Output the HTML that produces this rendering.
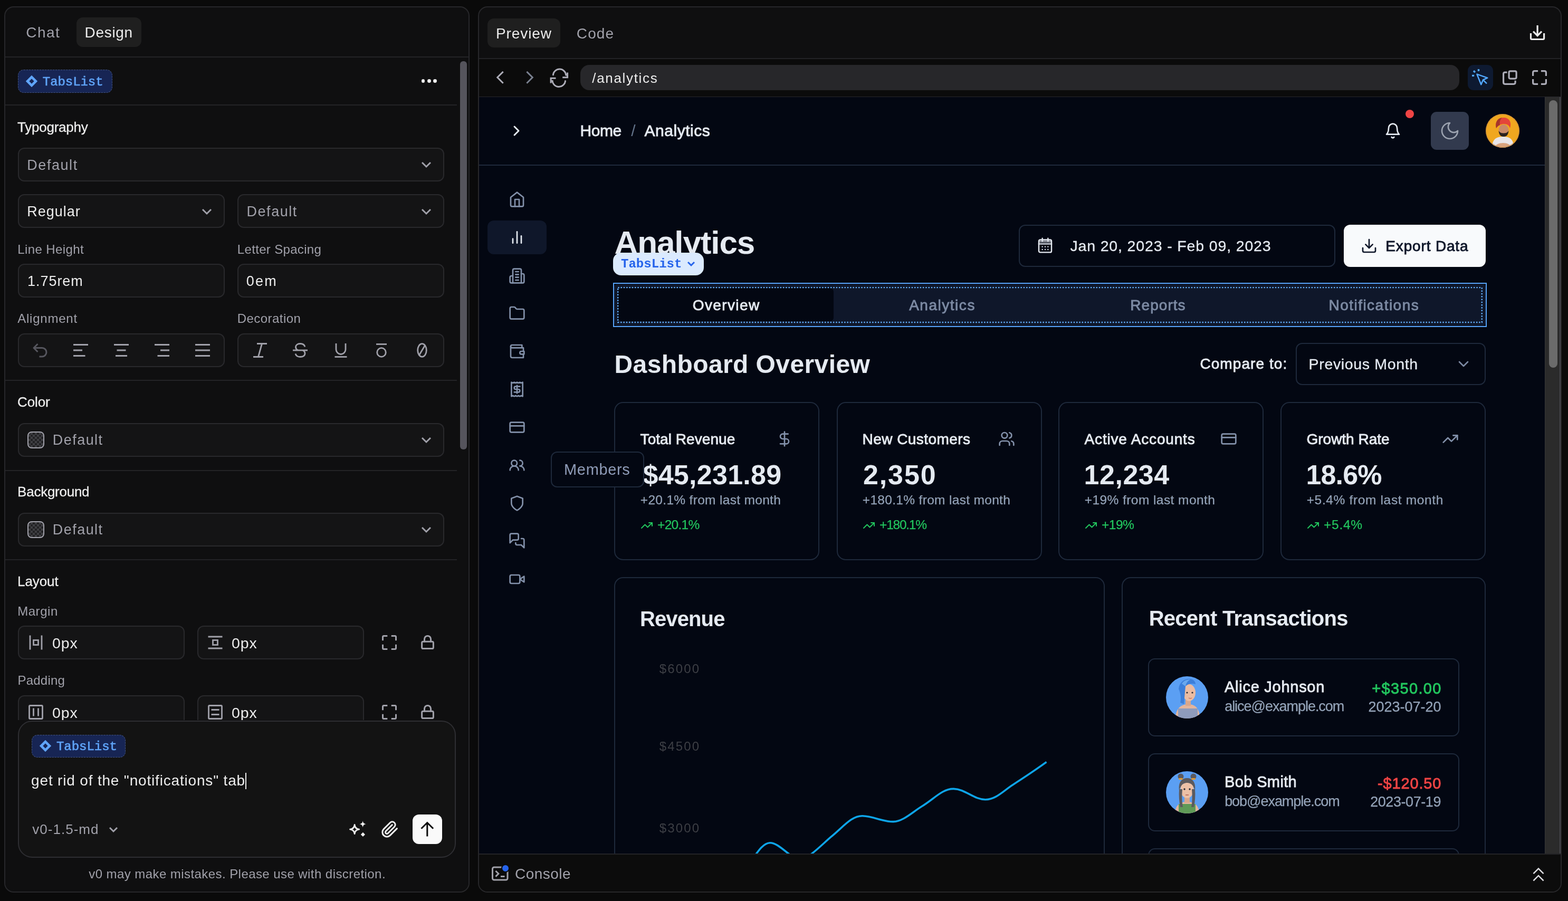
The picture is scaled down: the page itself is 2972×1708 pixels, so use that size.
<!DOCTYPE html>
<html lang="en"><head><meta charset="utf-8"><title>v0 – Analytics dashboard</title>
<style>
html,body{margin:0;padding:0}
body{width:2972px;height:1708px;background:#0a0a0a;position:relative;overflow:hidden;font-family:"Liberation Sans",sans-serif;will-change:transform;}
body div,body span.t,body svg{position:absolute;box-sizing:border-box}
span.t{white-space:pre;line-height:1}
span.m{font-family:"Liberation Mono",monospace}
svg{overflow:visible}
</style></head>
<body>
<div style="left:8px;top:12px;width:882px;height:1680px;background:#0f0f10;border:2px solid #27272a;border-radius:18px;"></div>
<span class="t" style="top:48.00px;font-size:28px;color:#a1a1aa;letter-spacing:1.501px;left:49.20px;">Chat</span>
<div style="left:145px;top:33px;width:123px;height:56px;background:#1f1f1f;border-radius:12px;"></div>
<span class="t" style="top:48.00px;font-size:28px;color:#ededed;letter-spacing:0.678px;left:160.60px;">Design</span>
<div style="left:10px;top:107px;width:878px;height:2px;background:#232326;"></div>
<div style="left:34px;top:132px;width:179px;height:44px;background:#172554;border:1.500px dashed #44557f;border-radius:11px;"></div>
<svg style="left:46px;top:140px" width="28" height="28" viewBox="-14 -14 28 28" fill="none" stroke="#60a5fa" stroke-width="4.6"><rect x="-5.6" y="-5.6" width="11.2" height="11.2" transform="rotate(45)"/></svg>
<span class="t m" style="top:144.30px;font-size:24px;color:#60a5fa;-webkit-text-stroke:0.6px #60a5fa;letter-spacing:-0.063px;left:80.80px;">TabsList</span>
<div style="left:798.5px;top:150.4px;width:6.8px;height:6.8px;background:#ededed;border-radius:50%;"></div>
<div style="left:809.9px;top:150.4px;width:6.8px;height:6.8px;background:#ededed;border-radius:50%;"></div>
<div style="left:821.3px;top:150.4px;width:6.8px;height:6.8px;background:#ededed;border-radius:50%;"></div>
<div style="left:10px;top:198px;width:856px;height:2px;background:#232326;"></div>
<div style="left:872px;top:116px;width:12.5px;height:736px;background:#55545c;border-radius:6px;"></div>
<span class="t" style="top:228.39px;font-size:26px;color:#ededed;-webkit-text-stroke:0.3px #ededed;letter-spacing:-0.245px;left:33.10px;">Typography</span>
<div style="left:34px;top:280px;width:808px;height:64px;background:#141415;border:2px solid #29292c;border-radius:12px;"></div>
<span class="t" style="top:299.84px;font-size:27px;color:#a1a1aa;letter-spacing:1.559px;left:51.25px;">Default</span>
<svg style="left:798px;top:306.2px" width="20" height="12" viewBox="-2 -2 20 12" fill="none" stroke="#a1a1aa" stroke-width="3" stroke-linecap="butt" stroke-linejoin="miter"><path d="M0 0L8 8L16 0"/></svg>
<div style="left:34px;top:368px;width:392px;height:64px;background:#141415;border:2px solid #29292c;border-radius:12px;"></div>
<div style="left:450px;top:368px;width:392px;height:64px;background:#141415;border:2px solid #29292c;border-radius:12px;"></div>
<span class="t" style="top:388.14px;font-size:27px;color:#ededed;letter-spacing:1.009px;left:51.25px;">Regular</span>
<svg style="left:381.7px;top:394.7px" width="20" height="12" viewBox="-2 -2 20 12" fill="none" stroke="#a1a1aa" stroke-width="3" stroke-linecap="butt" stroke-linejoin="miter"><path d="M0 0L8 8L16 0"/></svg>
<span class="t" style="top:388.14px;font-size:27px;color:#a1a1aa;letter-spacing:1.559px;left:467.45px;">Default</span>
<svg style="left:798px;top:394.7px" width="20" height="12" viewBox="-2 -2 20 12" fill="none" stroke="#a1a1aa" stroke-width="3" stroke-linecap="butt" stroke-linejoin="miter"><path d="M0 0L8 8L16 0"/></svg>
<span class="t" style="top:460.98px;font-size:24px;color:#a1a1aa;letter-spacing:0.396px;left:33.20px;">Line Height</span>
<span class="t" style="top:460.98px;font-size:24px;color:#a1a1aa;letter-spacing:0.331px;left:449.80px;">Letter Spacing</span>
<div style="left:34px;top:500px;width:392px;height:64px;background:#141415;border:2px solid #29292c;border-radius:12px;"></div>
<div style="left:450px;top:500px;width:392px;height:64px;background:#141415;border:2px solid #29292c;border-radius:12px;"></div>
<span class="t" style="top:519.54px;font-size:27px;color:#ededed;letter-spacing:0.975px;left:51.95px;">1.75rem</span>
<span class="t" style="top:519.54px;font-size:27px;color:#ededed;letter-spacing:2.242px;left:466.65px;">0em</span>
<span class="t" style="top:592.38px;font-size:24px;color:#a1a1aa;letter-spacing:0.781px;left:33.20px;">Alignment</span>
<span class="t" style="top:592.38px;font-size:24px;color:#a1a1aa;letter-spacing:0.446px;left:449.80px;">Decoration</span>
<div style="left:34px;top:632px;width:392px;height:64px;background:#141415;border:2px solid #29292c;border-radius:12px;"></div>
<div style="left:450px;top:632px;width:392px;height:64px;background:#141415;border:2px solid #29292c;border-radius:12px;"></div>
<svg style="left:58.4px;top:645.6px;" width="36" height="36" viewBox="0 0 24 24" fill="none" stroke="#56565e" stroke-width="2" stroke-linecap="butt" stroke-linejoin="round"><path d="M9 14 4 9l5-5"/><path d="M4 9h10.500a5.500 5.500 0 0 1 0 11H11"/></svg>
<svg style="left:138.6px;top:649.6px" width="28" height="28" viewBox="0 0 28 28" fill="none" stroke="#a1a1aa" stroke-width="3"><path d="M0 3.5H28"/><path d="M0 14H17"/><path d="M0 24.5H22.5"/></svg>
<svg style="left:215.8px;top:649.6px" width="28" height="28" viewBox="0 0 28 28" fill="none" stroke="#a1a1aa" stroke-width="3"><path d="M0 3.5H28"/><path d="M5.5 14H22.5"/><path d="M3 24.5H25"/></svg>
<svg style="left:293px;top:649.6px" width="28" height="28" viewBox="0 0 28 28" fill="none" stroke="#a1a1aa" stroke-width="3"><path d="M0 3.5H28"/><path d="M11 14H28"/><path d="M5.5 24.5H28"/></svg>
<svg style="left:370px;top:649.6px" width="28" height="28" viewBox="0 0 28 28" fill="none" stroke="#a1a1aa" stroke-width="3"><path d="M0 3.5H28"/><path d="M0 14H28"/><path d="M0 24.5H28"/></svg>
<svg style="left:477px;top:647.6px" width="32" height="32" viewBox="0 0 32 32" fill="none" stroke="#a1a1aa" stroke-width="2.8"><path d="M10 3.500H29M3 28.500H22M19.500 3.500L12.500 28.500"/></svg>
<svg style="left:552.6px;top:647.6px" width="32" height="32" viewBox="0 0 32 32" fill="none" stroke="#a1a1aa" stroke-width="2.8"><path d="M2 16H30"/><path d="M25 9.500C24 5.500 20.500 3.500 16 3.500 11 3.500 7.500 6 7.500 10c0 2.500 1.500 4.500 4 6"/><path d="M7 22.500c1 4 4.500 6 9 6 5.500 0 9-2.500 9-6.500 0-2.500-1.200-4.500-4-6"/></svg>
<svg style="left:629.5px;top:647.6px" width="32" height="32" viewBox="0 0 32 32" fill="none" stroke="#a1a1aa" stroke-width="2.8"><path d="M7 3v11.500a9 9 0 0 0 18 0V3"/><path d="M4.500 28.500h23"/></svg>
<svg style="left:706.7px;top:647.6px" width="32" height="32" viewBox="0 0 32 32" fill="none" stroke="#a1a1aa" stroke-width="2.8"><path d="M6 4.500h20"/><circle cx="16" cy="20" r="8.300"/></svg>
<svg style="left:783.7px;top:647.6px" width="32" height="32" viewBox="0 0 32 32" fill="none" stroke="#a1a1aa" stroke-width="2.8"><ellipse cx="16" cy="16" rx="8.300" ry="12.300"/><path d="M22 6L10 26"/></svg>
<div style="left:10px;top:720px;width:856px;height:2px;background:#232326;"></div>
<span class="t" style="top:749.19px;font-size:26px;color:#ededed;-webkit-text-stroke:0.3px #ededed;letter-spacing:-0.143px;left:33.10px;">Color</span>
<div style="left:34px;top:802px;width:808px;height:64px;background:#141415;border:2px solid #29292c;border-radius:12px;"></div>
<div style="left:52px;top:818px;width:32px;height:32px;border:2.5px solid #a1a1aa;border-radius:8px;background-color:#2a2a2c;background-image:repeating-conic-gradient(#3f3f43 0% 25%,#222224 0% 50%);background-size:8px 8px;"></div>
<span class="t" style="top:821.24px;font-size:27px;color:#a1a1aa;letter-spacing:1.442px;left:99.85px;">Default</span>
<svg style="left:798px;top:828px" width="20" height="12" viewBox="-2 -2 20 12" fill="none" stroke="#a1a1aa" stroke-width="3" stroke-linecap="butt" stroke-linejoin="miter"><path d="M0 0L8 8L16 0"/></svg>
<div style="left:10px;top:890.5px;width:856px;height:2px;background:#232326;"></div>
<span class="t" style="top:918.99px;font-size:26px;color:#ededed;-webkit-text-stroke:0.3px #ededed;letter-spacing:-0.255px;left:33.10px;">Background</span>
<div style="left:34px;top:972px;width:808px;height:64px;background:#141415;border:2px solid #29292c;border-radius:12px;"></div>
<div style="left:52px;top:988px;width:32px;height:32px;border:2.5px solid #a1a1aa;border-radius:8px;background-color:#2a2a2c;background-image:repeating-conic-gradient(#3f3f43 0% 25%,#222224 0% 50%);background-size:8px 8px;"></div>
<span class="t" style="top:990.84px;font-size:27px;color:#a1a1aa;letter-spacing:1.442px;left:99.85px;">Default</span>
<svg style="left:798px;top:997.8px" width="20" height="12" viewBox="-2 -2 20 12" fill="none" stroke="#a1a1aa" stroke-width="3" stroke-linecap="butt" stroke-linejoin="miter"><path d="M0 0L8 8L16 0"/></svg>
<div style="left:10px;top:1060px;width:856px;height:2px;background:#232326;"></div>
<span class="t" style="top:1089.19px;font-size:26px;color:#ededed;-webkit-text-stroke:0.3px #ededed;letter-spacing:-0.102px;left:33.10px;">Layout</span>
<span class="t" style="top:1146.78px;font-size:24px;color:#a1a1aa;letter-spacing:0.544px;left:33.20px;">Margin</span>
<div style="left:34px;top:1186px;width:316px;height:64px;background:#141415;border:2px solid #29292c;border-radius:12px;"></div>
<div style="left:374px;top:1186px;width:316px;height:64px;background:#141415;border:2px solid #29292c;border-radius:12px;"></div>
<span class="t" style="top:1204.87px;font-size:28.5px;color:#ededed;letter-spacing:0.915px;left:99.08px;">0px</span>
<span class="t" style="top:1204.87px;font-size:28.5px;color:#ededed;letter-spacing:0.915px;left:438.88px;">0px</span>
<svg style="left:52px;top:1201.9px" width="32" height="32" viewBox="0 0 32 32" fill="none" stroke="#a1a1aa" stroke-width="2.8"><path d="M5 2.500v27M27 2.500v27"/><rect x="11.500" y="11.500" width="9" height="9"/></svg>
<svg style="left:392px;top:1201.9px" width="32" height="32" viewBox="0 0 32 32" fill="none" stroke="#a1a1aa" stroke-width="2.8"><path d="M2.500 5h27M2.500 27h27"/><rect x="11.500" y="11.500" width="9" height="9"/></svg>
<svg style="left:721.8px;top:1201.9px" width="32" height="32" viewBox="721.8 1201.9 32 32" fill="none" stroke="#a1a1aa" stroke-width="3" stroke-linecap="butt" stroke-linejoin="miter"><path d="M725.3 1214.2V1207.4Q725.3 1205.4 727.3 1205.4H734.1M750.3 1214.2V1207.4Q750.3 1205.4 748.3 1205.4H741.5M750.3 1221.6V1228.4Q750.3 1230.4 748.3 1230.4H741.5M725.3 1221.6V1228.4Q725.3 1230.4 727.3 1230.4H734.1"/></svg>
<svg style="left:795.5px;top:1202.9px;" width="29" height="29" viewBox="0 0 24 24" fill="none" stroke="#a1a1aa" stroke-width="2.5" stroke-linecap="round" stroke-linejoin="round"><rect width="18" height="11" x="3" y="11" rx="2" ry="2"/><path d="M7 11V7a5 5 0 0 1 10 0v4"/></svg>
<div style="left:34px;top:1318px;width:316px;height:64px;background:#141415;border:2px solid #29292c;border-radius:12px;"></div>
<div style="left:374px;top:1318px;width:316px;height:64px;background:#141415;border:2px solid #29292c;border-radius:12px;"></div>
<span class="t" style="top:1336.77px;font-size:28.5px;color:#ededed;letter-spacing:0.915px;left:99.08px;">0px</span>
<span class="t" style="top:1336.77px;font-size:28.5px;color:#ededed;letter-spacing:0.915px;left:438.88px;">0px</span>
<svg style="left:52px;top:1333.8px" width="32" height="32" viewBox="0 0 32 32" fill="none" stroke="#a1a1aa" stroke-width="2.8"><rect x="3.500" y="3.500" width="25" height="25" rx="1.500"/><path d="M11.500 8.500v15M20.500 8.500v15"/></svg>
<svg style="left:392px;top:1333.8px" width="32" height="32" viewBox="0 0 32 32" fill="none" stroke="#a1a1aa" stroke-width="2.8"><rect x="3.500" y="3.500" width="25" height="25" rx="1.500"/><path d="M8.500 11.500h15M8.500 20.500h15"/></svg>
<svg style="left:721.8px;top:1333.8px" width="32" height="32" viewBox="721.8 1333.8 32 32" fill="none" stroke="#a1a1aa" stroke-width="3" stroke-linecap="butt" stroke-linejoin="miter"><path d="M725.3 1346.1V1339.3Q725.3 1337.3 727.3 1337.3H734.1M750.3 1346.1V1339.3Q750.3 1337.3 748.3 1337.3H741.5M750.3 1353.5V1360.3Q750.3 1362.3 748.3 1362.3H741.5M725.3 1353.5V1360.3Q725.3 1362.3 727.3 1362.3H734.1"/></svg>
<svg style="left:795.5px;top:1334.8px;" width="29" height="29" viewBox="0 0 24 24" fill="none" stroke="#a1a1aa" stroke-width="2.5" stroke-linecap="round" stroke-linejoin="round"><rect width="18" height="11" x="3" y="11" rx="2" ry="2"/><path d="M7 11V7a5 5 0 0 1 10 0v4"/></svg>
<span class="t" style="top:1277.98px;font-size:24px;color:#a1a1aa;letter-spacing:0.250px;left:33.40px;">Padding</span>
<div style="left:10px;top:1365px;width:878px;height:324px;background:#0f0f10;border-radius:0 0 16px 16px;"></div>
<div style="left:34px;top:1366px;width:830px;height:260px;background:#131313;border:2px solid #2e2e32;border-radius:27px;"></div>
<div style="left:60px;top:1392.5px;width:178px;height:43px;background:#172554;border:1.500px dashed #44557f;border-radius:11px;"></div>
<svg style="left:71.6px;top:1400px" width="28" height="28" viewBox="-14 -14 28 28" fill="none" stroke="#60a5fa" stroke-width="4.6"><rect x="-5.6" y="-5.6" width="11.2" height="11.2" transform="rotate(45)"/></svg>
<span class="t m" style="top:1404.30px;font-size:24px;color:#60a5fa;-webkit-text-stroke:0.6px #60a5fa;letter-spacing:-0.034px;left:107.00px;">TabsList</span>
<span class="t" style="top:1466.40px;font-size:28px;color:#ededed;letter-spacing:0.823px;left:59.10px;">get rid of the "notifications" tab</span>
<div style="left:465.4px;top:1464.5px;width:2px;height:31px;background:#ededed;"></div>
<span class="t" style="top:1558.99px;font-size:26px;color:#a1a1aa;letter-spacing:1.015px;left:61.30px;">v0-1.5-md</span>
<svg style="left:205.8px;top:1567px" width="18" height="11" viewBox="-2 -2 18 11" fill="none" stroke="#a1a1aa" stroke-width="3" stroke-linecap="butt" stroke-linejoin="miter"><path d="M0 0L7 7L14 0"/></svg>
<svg style="left:655px;top:1550px" width="46" height="44" viewBox="655 1550 46 44" fill="none" stroke="#ededed" stroke-width="2.8" stroke-linecap="butt" stroke-linejoin="miter"><path d="M672.1 1563.5Q672.874 1571.33 680.7 1572.1Q672.874 1572.87 672.1 1580.7Q671.326 1572.87 663.5 1572.1Q671.326 1571.33 672.1 1563.5Z" stroke-linejoin="round"/><path d="M687.6 1556.1Q688.158 1561.74 693.8 1562.3Q688.158 1562.86 687.6 1568.5Q687.042 1562.86 681.4 1562.3Q687.042 1561.74 687.6 1556.1Z" fill="#ededed" stroke="none"/><path d="M687.900 1577.800l4.100 4.100-4.100 4.100-4.100-4.100z" fill="#ededed" stroke="none"/></svg>
<svg style="left:721.6px;top:1555px;" width="34" height="34" viewBox="0 0 24 24" fill="none" stroke="#ededed" stroke-width="2.1" stroke-linecap="round" stroke-linejoin="round"><path d="m21.440 11.050-9.190 9.190a6 6 0 0 1-8.490-8.490l8.570-8.570A4 4 0 1 1 18 8.840l-8.590 8.570a2 2 0 0 1-2.830-2.830l8.490-8.480"/></svg>
<div style="left:782px;top:1544px;width:56px;height:56px;background:#fafafa;border-radius:12px;"></div>
<svg style="left:790px;top:1552px" width="40" height="40" viewBox="790 1552 40 40" fill="none" stroke="#0a0a0a" stroke-width="3" stroke-linecap="butt" stroke-linejoin="miter"><path d="M798.500 1570.800L809.800 1559.500L821.100 1570.800M809.800 1559.500V1585.600"/></svg>
<span class="t" style="top:1645.38px;font-size:24px;color:#a1a1aa;letter-spacing:0.432px;left:-150.384px;width:1200px;text-align:center;">v0 may make mistakes. Please use with discretion.</span>
<div style="left:906px;top:12px;width:2054px;height:1680px;background:#0f0f10;border:2px solid #27272a;border-radius:18px;"></div>
<div style="left:924px;top:34.5px;width:138px;height:55px;background:#1f1f1f;border-radius:12px;"></div>
<span class="t" style="top:49.50px;font-size:28px;color:#ededed;letter-spacing:0.894px;left:940.00px;">Preview</span>
<span class="t" style="top:49.50px;font-size:28px;color:#a1a1aa;letter-spacing:1.108px;left:1092.80px;">Code</span>
<svg style="left:2895px;top:44px" width="38" height="36" viewBox="2895 44 38 36" fill="none" stroke="#ededed" stroke-width="3.2" stroke-linecap="butt" stroke-linejoin="miter"><path d="M2901.500 63V72.500Q2901.500 74.500 2903.500 74.500H2924.600Q2926.600 74.500 2926.600 72.500V63M2914.100 47.900V67M2906.100 59.700L2914.100 67.700L2922.100 59.700"/></svg>
<div style="left:908px;top:110px;width:2050px;height:2px;background:#232326;"></div>
<div style="left:908px;top:112px;width:2050px;height:72px;background:#0b0b0b;"></div>
<svg style="left:936px;top:130px" width="24" height="34" viewBox="936 130 24 34" fill="none" stroke="#adadb8" stroke-width="3" stroke-linecap="butt" stroke-linejoin="miter"><path d="M953.700 135.900L942.800 146.800L953.700 157.700"/></svg>
<svg style="left:992px;top:130px" width="24" height="34" viewBox="992 130 24 34" fill="none" stroke="#7a8190" stroke-width="3" stroke-linecap="butt" stroke-linejoin="miter"><path d="M998.400 135.900L1009.300 146.800L998.400 157.700"/></svg>
<svg style="left:1040px;top:130px" width="40" height="36" viewBox="1040 130 40 36" fill="none" stroke="#adadb8" stroke-width="3" stroke-linecap="butt" stroke-linejoin="miter"><path d="M1048.300 143.100A12.200 12.200 0 0 1 1072.800 143.600M1075.600 137.400V146.700H1066.200M1071.600 152.400A12.200 12.200 0 0 1 1047 151.900M1044.100 157.600V148.200H1053.500"/></svg>
<div style="left:1100px;top:123px;width:1665.6px;height:48px;background:#27272a;border-radius:17px;"></div>
<span class="t" style="top:134.99px;font-size:26px;color:#ededed;letter-spacing:1.664px;left:1122.30px;">/analytics</span>
<div style="left:2782px;top:123px;width:48px;height:48px;background:#0e1a31;border-radius:11px;"></div>
<svg style="left:2786px;top:127px" width="40" height="40" viewBox="2786 127 40 40" fill="none" stroke="#52a8ff" stroke-width="2.5" stroke-linecap="butt" stroke-linejoin="miter"><path d="M2799.400 140.600L2819.300 147.600L2811 151.500L2807.300 160.300ZM2811.500 152L2818 158.300" stroke-linejoin="round"/><path d="M2802.500 130.900V135.100M2793 134.200L2795.900 137.100M2790 143.400H2794.200" stroke-width="3.400"/></svg>
<svg style="left:2844px;top:130px" width="36" height="34" viewBox="2844 130 36 34" fill="none" stroke="#adadb8" stroke-width="3.2" stroke-linecap="butt" stroke-linejoin="miter"><rect x="2860.100" y="134.900" width="14" height="14.200" rx="2.500"/><path d="M2856.500 137.100H2852.600Q2849.600 137.100 2849.600 140.100V156.300Q2849.600 159.300 2852.600 159.300H2869.100Q2872.100 159.300 2872.100 156.300V152.700"/></svg>
<svg style="left:2901.9px;top:131px" width="32" height="32" viewBox="2901.9 131 32 32" fill="none" stroke="#adadb8" stroke-width="3.2" stroke-linecap="butt" stroke-linejoin="miter"><path d="M2905.5 144.1V137.6Q2905.5 134.6 2908.5 134.6H2915M2930.3 144.1V137.6Q2930.3 134.6 2927.3 134.6H2920.8M2930.3 149.9V156.4Q2930.3 159.4 2927.3 159.4H2920.8M2905.5 149.9V156.4Q2905.5 159.4 2908.5 159.4H2915"/></svg>
<div style="left:908px;top:183px;width:2050px;height:1435.500px;background:#030712;overflow:hidden;border-top:1.500px solid #26262b;">
<div style="left:-908px;top:-184.500px;width:2972px;height:1708px;">
<div style="left:2928px;top:183px;width:30px;height:1436px;background:#2b2b2b;border-left:1.500px solid #363636;"></div>
<div style="left:2955.5px;top:183px;width:2.5px;height:1436px;background:#46464c;"></div>
<div style="left:2936px;top:190px;width:16px;height:507px;background:#6b6b6b;border-radius:8px;"></div>
<div style="left:908px;top:312px;width:2020px;height:2px;background:#1e293b;"></div>
<svg style="left:963.4px;top:232px;" width="32" height="32" viewBox="0 0 24 24" fill="none" stroke="#e5eaf1" stroke-width="2.2" stroke-linecap="round" stroke-linejoin="round"><path d="m9 18 6-6-6-6"/></svg>
<span class="t" style="top:233.91px;font-size:30px;color:#e5eaf1;-webkit-text-stroke:0.85px #e5eaf1;letter-spacing:-0.427px;left:1099.50px;">Home</span>
<span class="t" style="top:233.91px;font-size:30px;color:#64748b;left:600.4px;width:1200px;text-align:center;">/</span>
<span class="t" style="top:233.91px;font-size:30px;color:#e5eaf1;-webkit-text-stroke:0.85px #e5eaf1;letter-spacing:0.525px;left:1221.50px;">Analytics</span>
<svg style="left:2624px;top:232px;" width="32" height="32" viewBox="0 0 24 24" fill="none" stroke="#e5eaf1" stroke-width="2" stroke-linecap="round" stroke-linejoin="round"><path d="M6 8a6 6 0 0 1 12 0c0 7 3 9 3 9H3s3-2 3-9"/><path d="M10.300 21a1.940 1.940 0 0 0 3.400 0"/></svg>
<div style="left:2664px;top:208px;width:16px;height:16px;background:#ef4444;border-radius:50%;"></div>
<div style="left:2712px;top:212px;width:72px;height:72px;background:#323a4e;border-radius:11px;"></div>
<svg style="left:2728px;top:228px;" width="40" height="40" viewBox="0 0 24 24" fill="none" stroke="#9ca3b0" stroke-width="1.6" stroke-linecap="round" stroke-linejoin="round"><path d="M12 3a6 6 0 0 0 9 9 9 9 0 1 1-9-9Z"/></svg>
<svg style="left:2816px;top:216px" width="64" height="64" viewBox="0 0 64 64"><defs><clipPath id="avm"><circle cx="32" cy="32" r="32"/></clipPath></defs><g clip-path="url(#avm)"><rect width="64" height="64" fill="#f0a71f"/><path d="M12 64c0-14 6-21 21-21s20 7 20 21z" fill="#e9e5e8"/><path d="M17 64c1-6 8-9 16-9s14 3 15 9z" fill="#d9a37e"/><ellipse cx="34" cy="31" rx="9.500" ry="11" fill="#c98a68"/><path d="M24.500 32c1 9 5 11 9.500 11s8.500-2 9.500-11c-3 4-6 4.500-9.500 4.500s-6.500-.5-9.500-4.500z" fill="#2b221f"/><path d="M20 27c-3-12 4-20 14-20s16 8 12 20c-1-5-5-8-11-8s-12 2-15 8z" fill="#e4453a"/><path d="M20 27c-3-12 3-19 11-20-4 4-5 9-4 14-3 1-5 3-7 6z" fill="#a5352a"/><circle cx="32" cy="32" r="31.200" fill="none" stroke="#c98a3f" stroke-width="1.600" opacity=".7"/></g></svg>
<div style="left:924px;top:418px;width:112px;height:64.5px;background:#0f172a;border-radius:12px;"></div>
<svg style="left:964px;top:362.6px;" width="32" height="32" viewBox="0 0 24 24" fill="none" stroke="#8391aa" stroke-width="2" stroke-linecap="round" stroke-linejoin="round"><path d="m3 9 9-7 9 7v11a2 2 0 0 1-2 2H5a2 2 0 0 1-2-2z"/><path d="M9 22V12h6v10"/></svg>
<svg style="left:964px;top:434.4px;" width="32" height="32" viewBox="0 0 24 24" fill="none" stroke="#e5eaf1" stroke-width="2" stroke-linecap="round" stroke-linejoin="round"><path d="M18 20V10"/><path d="M12 20V4"/><path d="M6 20v-6"/></svg>
<svg style="left:964px;top:507px;" width="32" height="32" viewBox="0 0 24 24" fill="none" stroke="#8391aa" stroke-width="2" stroke-linecap="round" stroke-linejoin="round"><path d="M6 22V4a2 2 0 0 1 2-2h8a2 2 0 0 1 2 2v18Z"/><path d="M6 12H4a2 2 0 0 0-2 2v6a2 2 0 0 0 2 2h2"/><path d="M18 9h2a2 2 0 0 1 2 2v9a2 2 0 0 1-2 2h-2"/><path d="M10 6h4"/><path d="M10 10h4"/><path d="M10 14h4"/><path d="M10 18h4"/></svg>
<svg style="left:964px;top:578.5px;" width="32" height="32" viewBox="0 0 24 24" fill="none" stroke="#8391aa" stroke-width="2" stroke-linecap="round" stroke-linejoin="round"><path d="M20 20a2 2 0 0 0 2-2V8a2 2 0 0 0-2-2h-7.9a2 2 0 0 1-1.69-.9L9.6 3.9A2 2 0 0 0 7.93 3H4a2 2 0 0 0-2 2v13a2 2 0 0 0 2 2Z"/></svg>
<svg style="left:964px;top:650.5px;" width="32" height="32" viewBox="0 0 24 24" fill="none" stroke="#8391aa" stroke-width="2" stroke-linecap="round" stroke-linejoin="round"><path d="M21 12V7H5a2 2 0 0 1 0-4h14v4"/><path d="M3 5v14a2 2 0 0 0 2 2h16v-5"/><path d="M18 12a2 2 0 0 0 0 4h4v-4Z"/></svg>
<svg style="left:964px;top:722.5px;" width="32" height="32" viewBox="0 0 24 24" fill="none" stroke="#8391aa" stroke-width="2" stroke-linecap="round" stroke-linejoin="round"><path d="M4 2v20l2-1 2 1 2-1 2 1 2-1 2 1 2-1 2 1V2l-2 1-2-1-2 1-2-1-2 1-2-1-2 1Z"/><path d="M16 8h-6a2 2 0 1 0 0 4h4a2 2 0 1 1 0 4H8"/><path d="M12 17.5v-11"/></svg>
<svg style="left:964px;top:794px;" width="32" height="32" viewBox="0 0 24 24" fill="none" stroke="#8391aa" stroke-width="2" stroke-linecap="round" stroke-linejoin="round"><rect width="20" height="14" x="2" y="5" rx="2"/><path d="M2 10h20"/></svg>
<svg style="left:964px;top:866px;" width="32" height="32" viewBox="0 0 24 24" fill="none" stroke="#8391aa" stroke-width="2" stroke-linecap="round" stroke-linejoin="round"><path d="M14 19a6 6 0 0 0-12 0"/><circle cx="8" cy="9" r="4"/><path d="M22 19a6 6 0 0 0-6-6 4 4 0 1 0 0-8"/></svg>
<svg style="left:964px;top:938.3px;" width="32" height="32" viewBox="0 0 24 24" fill="none" stroke="#8391aa" stroke-width="2" stroke-linecap="round" stroke-linejoin="round"><path d="M12 22s8-4 8-10V5l-8-3-8 3v7c0 6 8 10 8 10"/></svg>
<svg style="left:964px;top:1009.7px;" width="32" height="32" viewBox="0 0 24 24" fill="none" stroke="#8391aa" stroke-width="2" stroke-linecap="round" stroke-linejoin="round"><path d="M14 9a2 2 0 0 1-2 2H6l-4 4V4c0-1.1.9-2 2-2h8a2 2 0 0 1 2 2z"/><path d="M18 9h2a2 2 0 0 1 2 2v11l-4-4h-6a2 2 0 0 1-2-2v-1"/></svg>
<svg style="left:964px;top:1082.3px;" width="32" height="32" viewBox="0 0 24 24" fill="none" stroke="#8391aa" stroke-width="2" stroke-linecap="round" stroke-linejoin="round"><path d="m22 8-6 4 6 4V8Z"/><rect width="14" height="12" x="2" y="6" rx="2" ry="2"/></svg>
<span class="t" style="top:429.02px;font-size:62px;color:#e5eaf1;font-weight:700;letter-spacing:-1.104px;left:1164.50px;">Analytics</span>
<div style="left:1931px;top:426px;width:600px;height:80px;border:2px solid #1e293b;border-radius:12px;"></div>
<svg style="left:1964.6px;top:449.8px;" width="32" height="32" viewBox="0 0 24 24" fill="none" stroke="#e5eaf1" stroke-width="1.8" stroke-linecap="round" stroke-linejoin="round"><rect width="18" height="18" x="3" y="4" rx="2"/><path d="M16 2v4"/><path d="M8 2v4"/><path d="M3 10h18"/><path d="M8 14h.01M12 14h.01M16 14h.01M8 18h.01M12 18h.01M16 18h.01"/></svg>
<div style="left:1969.5px;top:455.5px;width:22px;height:5px;background:#e5eaf1;opacity:.55;"></div>
<span class="t" style="top:452.87px;font-size:28.5px;color:#e5eaf1;-webkit-text-stroke:0.3px #e5eaf1;letter-spacing:0.853px;left:2028.38px;">Jan 20, 2023 - Feb 09, 2023</span>
<div style="left:2547px;top:426px;width:269px;height:80px;background:#f8fafc;border-radius:12px;"></div>
<svg style="left:2579px;top:450px;" width="32" height="32" viewBox="0 0 24 24" fill="none" stroke="#0f172a" stroke-width="2" stroke-linecap="round" stroke-linejoin="round"><path d="M21 15v4a2 2 0 0 1-2 2H5a2 2 0 0 1-2-2v-4"/><path d="M7 10l5 5 5-5"/><path d="M12 15V3"/></svg>
<span class="t" style="top:453.30px;font-size:28px;color:#0f172a;-webkit-text-stroke:0.85px #0f172a;letter-spacing:0.840px;left:2626.30px;">Export Data</span>
<div style="left:1164px;top:538px;width:1652px;height:80px;background:#0f172a;border-radius:7px;"></div>
<div style="left:1172px;top:546.5px;width:408px;height:63px;background:#030712;border-radius:7px;"></div>
<div style="left:1162px;top:536px;width:1656px;height:84px;border:2.400px solid #56a2f8;"></div>
<svg style="left:1168px;top:542px" width="1644" height="72" viewBox="1168 542 1644 72" fill="none" stroke="#64b1fd" stroke-width="2.400" stroke-dasharray="2.500 2.800"><rect x="1171.200" y="545.100" width="1637.600" height="65.900"/></svg>
<span class="t" style="top:565.20px;font-size:28px;color:#e5eaf1;-webkit-text-stroke:0.85px #e5eaf1;letter-spacing:1.365px;left:776.683px;width:1200px;text-align:center;">Overview</span>
<span class="t" style="top:565.20px;font-size:28px;color:#7c8aa3;-webkit-text-stroke:0.85px #7c8aa3;letter-spacing:1.527px;left:1186.06px;width:1200px;text-align:center;">Analytics</span>
<span class="t" style="top:565.20px;font-size:28px;color:#7c8aa3;-webkit-text-stroke:0.85px #7c8aa3;letter-spacing:1.036px;left:1595.02px;width:1200px;text-align:center;">Reports</span>
<span class="t" style="top:565.20px;font-size:28px;color:#7c8aa3;-webkit-text-stroke:0.85px #7c8aa3;letter-spacing:1.479px;left:2004.34px;width:1200px;text-align:center;">Notifications</span>
<div style="left:1162px;top:479px;width:171.6px;height:43.5px;background:#dbeafe;border-radius:15px;"></div>
<span class="t m" style="top:489.60px;font-size:24px;color:#2563eb;font-weight:700;letter-spacing:0.023px;left:1177.00px;">TabsList</span>
<svg style="left:1302.2px;top:495.5px" width="16" height="10" viewBox="-2 -2 16 10" fill="none" stroke="#2563eb" stroke-width="3" stroke-linecap="butt" stroke-linejoin="miter"><path d="M0 0L6 6L12 0"/></svg>
<span class="t" style="top:667.27px;font-size:48px;color:#e5eaf1;font-weight:700;letter-spacing:0.403px;left:1164.50px;">Dashboard Overview</span>
<span class="t" style="top:676.70px;font-size:28px;color:#e5eaf1;-webkit-text-stroke:0.85px #e5eaf1;letter-spacing:1.078px;left:2274.40px;">Compare to:</span>
<div style="left:2456px;top:650px;width:360px;height:80px;border:2px solid #1e293b;border-radius:12px;"></div>
<span class="t" style="top:676.27px;font-size:28.5px;color:#e5eaf1;-webkit-text-stroke:0.3px #e5eaf1;letter-spacing:0.659px;left:2480.57px;">Previous Month</span>
<svg style="left:2757.7px;top:674px;" width="32" height="32" viewBox="0 0 24 24" fill="none" stroke="#7c8aa3" stroke-width="2" stroke-linecap="round" stroke-linejoin="round"><path d="m6 9 6 6 6-6"/></svg>
<div style="left:1164px;top:762px;width:389px;height:300px;border:2px solid #1e293b;border-radius:17px;"></div>
<span class="t" style="top:819.20px;font-size:28px;color:#e5eaf1;-webkit-text-stroke:0.85px #e5eaf1;letter-spacing:0.054px;left:1213.60px;">Total Revenue</span>
<svg style="left:1470.5px;top:816px;" width="32" height="32" viewBox="0 0 24 24" fill="none" stroke="#8391aa" stroke-width="2" stroke-linecap="round" stroke-linejoin="round"><path d="M12 2v20"/><path d="M17 5H9.5a3.5 3.5 0 0 0 0 7h5a3.5 3.5 0 0 1 0 7H6"/></svg>
<span class="t" style="top:874.28px;font-size:52px;color:#e5eaf1;font-weight:700;letter-spacing:0.264px;left:1218.50px;">$45,231.89</span>
<span class="t" style="top:936.26px;font-size:24.5px;color:#94a3b8;-webkit-text-stroke:0.25px #94a3b8;letter-spacing:0.318px;left:1213.78px;">+20.1% from last month</span>
<svg style="left:1214.2px;top:984px;" width="24" height="24" viewBox="0 0 24 24" fill="none" stroke="#22c55e" stroke-width="2" stroke-linecap="round" stroke-linejoin="round"><path d="M22 7l-8.500 8.500-5-5L2 17"/><path d="M16 7h6v6"/></svg>
<span class="t" style="top:983.56px;font-size:24.5px;color:#22c55e;-webkit-text-stroke:0.25px #22c55e;letter-spacing:-0.736px;left:1246.08px;">+20.1%</span>
<div style="left:1586px;top:762px;width:389px;height:300px;border:2px solid #1e293b;border-radius:17px;"></div>
<span class="t" style="top:819.20px;font-size:28px;color:#e5eaf1;-webkit-text-stroke:0.85px #e5eaf1;letter-spacing:0.441px;left:1634.60px;">New Customers</span>
<svg style="left:1891.5px;top:816px;" width="32" height="32" viewBox="0 0 24 24" fill="none" stroke="#8391aa" stroke-width="2" stroke-linecap="round" stroke-linejoin="round"><path d="M16 21v-2a4 4 0 0 0-4-4H6a4 4 0 0 0-4 4v2"/><circle cx="9" cy="7" r="4"/><path d="M22 21v-2a4 4 0 0 0-3-3.87"/><path d="M16 3.13a4 4 0 0 1 0 7.75"/></svg>
<span class="t" style="top:874.28px;font-size:52px;color:#e5eaf1;font-weight:700;letter-spacing:1.875px;left:1636.00px;">2,350</span>
<span class="t" style="top:936.26px;font-size:24.5px;color:#94a3b8;-webkit-text-stroke:0.25px #94a3b8;letter-spacing:0.321px;left:1634.78px;">+180.1% from last month</span>
<svg style="left:1635.2px;top:984px;" width="24" height="24" viewBox="0 0 24 24" fill="none" stroke="#22c55e" stroke-width="2" stroke-linecap="round" stroke-linejoin="round"><path d="M22 7l-8.500 8.500-5-5L2 17"/><path d="M16 7h6v6"/></svg>
<span class="t" style="top:983.56px;font-size:24.5px;color:#22c55e;-webkit-text-stroke:0.25px #22c55e;letter-spacing:-1.251px;left:1667.08px;">+180.1%</span>
<div style="left:2006px;top:762px;width:389px;height:300px;border:2px solid #1e293b;border-radius:17px;"></div>
<span class="t" style="top:819.20px;font-size:28px;color:#e5eaf1;-webkit-text-stroke:0.85px #e5eaf1;letter-spacing:0.815px;left:2055.60px;">Active Accounts</span>
<svg style="left:2312.5px;top:816px;" width="32" height="32" viewBox="0 0 24 24" fill="none" stroke="#8391aa" stroke-width="2" stroke-linecap="round" stroke-linejoin="round"><rect width="20" height="14" x="2" y="5" rx="2"/><path d="M2 10h20"/></svg>
<span class="t" style="top:874.28px;font-size:52px;color:#e5eaf1;font-weight:700;letter-spacing:0.539px;left:2054.50px;">12,234</span>
<span class="t" style="top:936.26px;font-size:24.5px;color:#94a3b8;-webkit-text-stroke:0.25px #94a3b8;letter-spacing:0.427px;left:2055.78px;">+19% from last month</span>
<svg style="left:2056.2px;top:984px;" width="24" height="24" viewBox="0 0 24 24" fill="none" stroke="#22c55e" stroke-width="2" stroke-linecap="round" stroke-linejoin="round"><path d="M22 7l-8.500 8.500-5-5L2 17"/><path d="M16 7h6v6"/></svg>
<span class="t" style="top:983.56px;font-size:24.5px;color:#22c55e;-webkit-text-stroke:0.25px #22c55e;letter-spacing:-0.514px;left:2088.08px;">+19%</span>
<div style="left:2427px;top:762px;width:389px;height:300px;border:2px solid #1e293b;border-radius:17px;"></div>
<span class="t" style="top:819.20px;font-size:28px;color:#e5eaf1;-webkit-text-stroke:0.85px #e5eaf1;letter-spacing:-0.011px;left:2476.50px;">Growth Rate</span>
<svg style="left:2733.4px;top:816px;" width="32" height="32" viewBox="0 0 24 24" fill="none" stroke="#8391aa" stroke-width="2" stroke-linecap="round" stroke-linejoin="round"><path d="M22 7l-8.500 8.500-5-5L2 17"/><path d="M16 7h6v6"/></svg>
<span class="t" style="top:874.28px;font-size:52px;color:#e5eaf1;font-weight:700;letter-spacing:-0.828px;left:2475.40px;">18.6%</span>
<span class="t" style="top:936.26px;font-size:24.5px;color:#94a3b8;-webkit-text-stroke:0.25px #94a3b8;letter-spacing:0.645px;left:2476.68px;">+5.4% from last month</span>
<svg style="left:2477.1px;top:984px;" width="24" height="24" viewBox="0 0 24 24" fill="none" stroke="#22c55e" stroke-width="2" stroke-linecap="round" stroke-linejoin="round"><path d="M22 7l-8.500 8.500-5-5L2 17"/><path d="M16 7h6v6"/></svg>
<span class="t" style="top:983.56px;font-size:24.5px;color:#22c55e;-webkit-text-stroke:0.25px #22c55e;letter-spacing:0.737px;left:2508.98px;">+5.4%</span>
<div style="left:1044px;top:856px;width:177px;height:68px;background:#030712;border:2px solid #1e293b;border-radius:12px;"></div>
<span class="t" style="top:876.65px;font-size:29px;color:#8f9cb8;letter-spacing:0.658px;left:1069.05px;">Members</span>
<div style="left:1164px;top:1094px;width:930px;height:700px;border:2px solid #1e293b;border-radius:17px;"></div>
<span class="t" style="top:1153.54px;font-size:40px;color:#e5eaf1;font-weight:700;letter-spacing:-0.892px;left:1213.00px;">Revenue</span>
<span class="t" style="top:1256.68px;font-size:24px;color:#3d3f45;letter-spacing:2.133px;left:1249.80px;">$6000</span>
<span class="t" style="top:1403.38px;font-size:24px;color:#3d3f45;letter-spacing:2.133px;left:1249.80px;">$4500</span>
<span class="t" style="top:1558.68px;font-size:24px;color:#3d3f45;letter-spacing:2.133px;left:1249.80px;">$3000</span>
<svg style="left:0;top:0" width="2972" height="1708" viewBox="0 0 2972 1708" fill="none" stroke="#0ea5e9" stroke-width="3.600"><path d="M1418 1640C1432 1622 1444 1598 1459.400 1597.700C1476 1597.400 1496 1624 1516 1632C1536 1624 1556 1603 1574.500 1586.900C1598 1568 1614 1546 1635 1546.800C1656 1547.600 1674 1558 1693.200 1557.600C1712 1557.200 1730 1539 1747 1528.700C1770 1515 1786 1495 1807.500 1495.400C1830 1495.800 1846 1516 1868 1515.700C1888 1515.400 1902 1499 1919.700 1487.700C1944 1472 1962 1460 1983.500 1444.500"/></svg>
<div style="left:2126px;top:1094px;width:690px;height:700px;border:2px solid #1e293b;border-radius:17px;"></div>
<span class="t" style="top:1152.54px;font-size:40px;color:#e5eaf1;font-weight:700;letter-spacing:-0.747px;left:2177.70px;">Recent Transactions</span>
<div style="left:2176px;top:1248px;width:590px;height:148px;border:2px solid #1e293b;border-radius:13px;"></div>
<svg style="left:2209.9px;top:1282.4px" width="80" height="80" viewBox="0 0 80 80"><defs><clipPath id="ava"><circle cx="40" cy="40" r="40"/></clipPath></defs><g clip-path="url(#ava)"><rect width="80" height="80" fill="#5b9ff3"/><path d="M18 80c0-16 8-27 24-27s22 11 22 27z" fill="#e3b59d"/><rect x="23" y="61" width="37" height="19" fill="#8f9bbb"/><rect x="37" y="42" width="10" height="14" fill="#d8a78d"/><ellipse cx="44" cy="31" rx="12" ry="16" fill="#ebbca2"/><path d="M24 24c1-12 10-19 20-19 7 0 12 4 12 10-7-2-14-1-19 4-1 10-2 22-3 34l-7-3c2-8 1-17-3-26z" fill="#3c7fda"/><path d="M30 14c4-6 10-8 16-8-5 3-8 7-9 13z" fill="#6aa8ee"/><circle cx="40" cy="31" r="1.600" fill="#2a2a33"/><circle cx="50" cy="31" r="1.600" fill="#2a2a33"/><path d="M43 41q3 2 6 0" stroke="#c06a5a" stroke-width="1.500" fill="none"/></g></svg>
<span class="t" style="top:1288.35px;font-size:29px;color:#e5eaf1;-webkit-text-stroke:0.85px #e5eaf1;letter-spacing:0.729px;left:2321.05px;">Alice Johnson</span>
<span class="t" style="top:1326.04px;font-size:27px;color:#94a3b8;-webkit-text-stroke:0.25px #94a3b8;letter-spacing:-1.019px;left:2321.15px;">alice@example.com</span>
<span class="t" style="top:1291.15px;font-size:29px;color:#22c55e;-webkit-text-stroke:0.9px #22c55e;letter-spacing:1.334px;right:239.266px;">+$350.00</span>
<span class="t" style="top:1327.44px;font-size:27px;color:#94a3b8;-webkit-text-stroke:0.25px #94a3b8;letter-spacing:-0.023px;right:240.623px;">2023-07-20</span>
<div style="left:2176px;top:1428px;width:590px;height:148px;border:2px solid #1e293b;border-radius:13px;"></div>
<svg style="left:2209.9px;top:1462.4px" width="80" height="80" viewBox="0 0 80 80"><defs><clipPath id="avb"><circle cx="40" cy="40" r="40"/></clipPath></defs><g clip-path="url(#avb)"><rect width="80" height="80" fill="#5b9ff3"/><path d="M17 80c0-14 8-22 23-22s23 8 23 22z" fill="#e3b59d"/><rect x="24" y="62" width="32" height="18" fill="#5f9a57"/><rect x="35" y="46" width="10" height="14" fill="#d8a78d"/><path d="M25 36c-2-15 5-23 15-23s17 8 15 23c-3-9-8-12-15-12s-12 3-15 12z" fill="#5b5a5f"/><ellipse cx="40" cy="35" rx="12.500" ry="16" fill="#ecc0a6"/><path d="M27 30c1-10 6-14 13-14s12 4 13 14c-4-6-8-8-13-8s-9 2-13 8z" fill="#5b5a5f"/><circle cx="28" cy="10" r="5.500" fill="#5b5a5f"/><circle cx="52" cy="10" r="5.500" fill="#5b5a5f"/><rect x="24" y="13" width="8" height="3" rx="1.500" fill="#e59a2e"/><rect x="48" y="13" width="8" height="3" rx="1.500" fill="#e59a2e"/><path d="M25 34c-1 12 0 24 2 34h5c-2-10-2-22-1-34zM55 34c1 12 0 24-2 34h-5c2-10 2-22 1-34z" fill="#5b5a5f"/><circle cx="35" cy="34" r="1.700" fill="#2a2a33"/><circle cx="45" cy="34" r="1.700" fill="#2a2a33"/><path d="M37 45h6" stroke="#b5604f" stroke-width="1.500" fill="none"/></g></svg>
<span class="t" style="top:1468.35px;font-size:29px;color:#e5eaf1;-webkit-text-stroke:0.85px #e5eaf1;letter-spacing:0.364px;left:2321.05px;">Bob Smith</span>
<span class="t" style="top:1506.04px;font-size:27px;color:#94a3b8;-webkit-text-stroke:0.25px #94a3b8;letter-spacing:-1.037px;left:2321.15px;">bob@example.com</span>
<span class="t" style="top:1471.15px;font-size:29px;color:#ef4444;-webkit-text-stroke:0.9px #ef4444;letter-spacing:0.829px;right:239.771px;">-$120.50</span>
<span class="t" style="top:1507.44px;font-size:27px;color:#94a3b8;-webkit-text-stroke:0.25px #94a3b8;letter-spacing:-0.434px;right:241.034px;">2023-07-19</span>
<div style="left:2176px;top:1608px;width:590px;height:148px;border:2px solid #1e293b;border-radius:13px;"></div>
<svg style="left:2209.9px;top:1642.4px" width="80" height="80" viewBox="0 0 80 80"><defs><clipPath id="avc"><circle cx="40" cy="40" r="40"/></clipPath></defs><g clip-path="url(#avc)"><rect width="80" height="80" fill="#5b9ff3"/><path d="M17 80c0-14 8-22 23-22s23 8 23 22z" fill="#e3b59d"/><rect x="24" y="62" width="32" height="18" fill="#e8e2da"/><rect x="35" y="46" width="10" height="14" fill="#d8a78d"/><path d="M25 36c-2-15 5-23 15-23s17 8 15 23c-3-9-8-12-15-12s-12 3-15 12z" fill="#3b2a20"/><ellipse cx="40" cy="35" rx="12.500" ry="16" fill="#ecc0a6"/><path d="M27 30c1-10 6-14 13-14s12 4 13 14c-4-6-8-8-13-8s-9 2-13 8z" fill="#3b2a20"/><circle cx="28" cy="10" r="5.500" fill="#3b2a20"/><circle cx="52" cy="10" r="5.500" fill="#3b2a20"/><rect x="24" y="13" width="8" height="3" rx="1.500" fill="#e59a2e"/><rect x="48" y="13" width="8" height="3" rx="1.500" fill="#e59a2e"/><path d="M25 34c-1 12 0 24 2 34h5c-2-10-2-22-1-34zM55 34c1 12 0 24-2 34h-5c2-10 2-22 1-34z" fill="#3b2a20"/><circle cx="35" cy="34" r="1.700" fill="#2a2a33"/><circle cx="45" cy="34" r="1.700" fill="#2a2a33"/><path d="M37 45h6" stroke="#b5604f" stroke-width="1.500" fill="none"/></g></svg>
<span class="t" style="top:1648.35px;font-size:29px;color:#e5eaf1;-webkit-text-stroke:0.85px #e5eaf1;letter-spacing:0.764px;left:2321.05px;">Charlie Brown</span>
<span class="t" style="top:1686.04px;font-size:27px;color:#94a3b8;-webkit-text-stroke:0.25px #94a3b8;letter-spacing:-0.906px;left:2321.15px;">charlie@example.com</span>
<span class="t" style="top:1651.15px;font-size:29px;color:#22c55e;-webkit-text-stroke:0.9px #22c55e;letter-spacing:1.363px;right:239.237px;">+$500.00</span>
<span class="t" style="top:1687.44px;font-size:27px;color:#94a3b8;-webkit-text-stroke:0.25px #94a3b8;letter-spacing:-0.101px;right:240.701px;">2023-07-18</span>
</div></div>
<div style="left:908px;top:1617.5px;width:2050px;height:2px;background:#232326;"></div>
<div style="left:908px;top:1619.5px;width:2050px;height:70.5px;background:#0c0c0c;border-radius:0 0 16px 16px;"></div>
<svg style="left:928px;top:1638px" width="40" height="36" viewBox="928 1638 40 36" fill="none" stroke="#a1a1aa" stroke-width="3" stroke-linecap="butt" stroke-linejoin="miter"><rect x="933.500" y="1644" width="28.500" height="24" rx="3"/><path d="M939.500 1651L944.800 1656.300L939.500 1661.600M949 1661.600H956.500"/></svg>
<div style="left:950px;top:1638px;width:16px;height:16px;background:#2563eb;border-radius:50%;border:2px solid #0c0c0c;"></div>
<span class="t" style="top:1642.80px;font-size:28px;color:#a1a1aa;letter-spacing:0.454px;left:976.10px;">Console</span>
<svg style="left:2893px;top:1634.5px;" width="46" height="46" viewBox="0 0 24 24" fill="none" stroke="#dcdce0" stroke-width="1.3" stroke-linecap="butt" stroke-linejoin="miter"><path d="m17 11-5-5-5 5"/><path d="m17 18-5-5-5 5"/></svg>
</body></html>
